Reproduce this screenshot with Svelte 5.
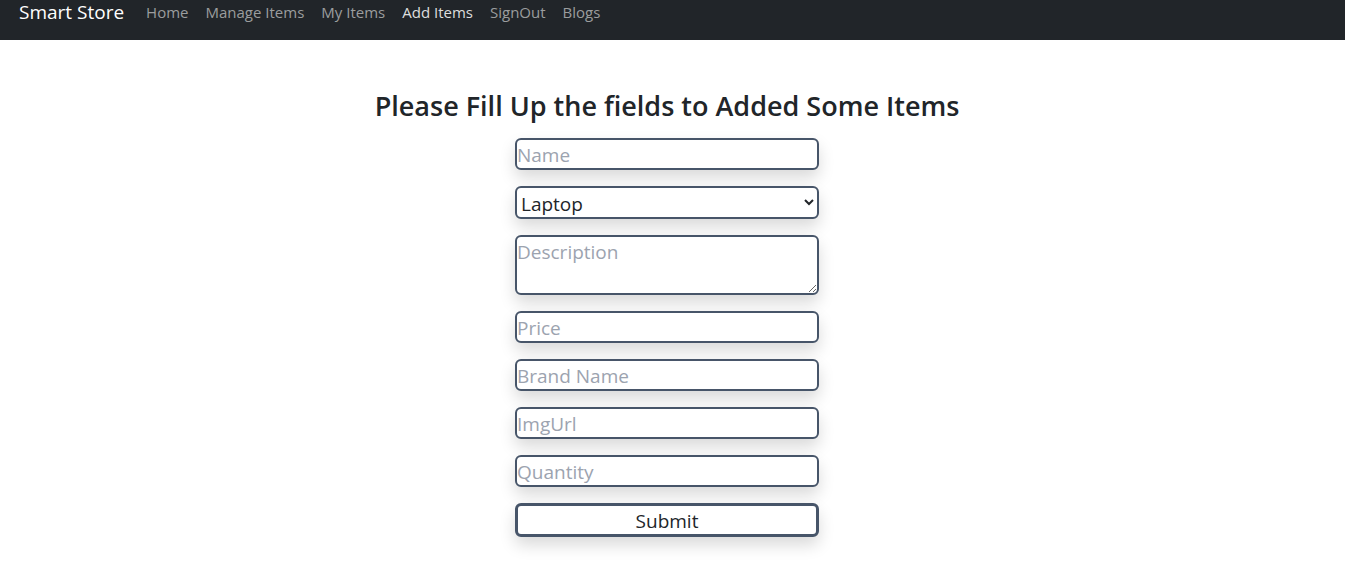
<script>
  const links = ['Home', 'Manage Items', 'My Items', 'Add Items', 'SignOut', 'Blogs'];
  const active = 'Add Items';
</script>

<nav>
  <a class="brand" href="#home">Smart Store</a>
  <div class="links">
    {#each links as link}
      <a href="#{link.replaceAll(' ', '').toLowerCase()}" class:active={link === active}>{link}</a>
    {/each}
  </div>
</nav>
<main>
  <h1>Please Fill Up the fields to Added Some Items</h1>
  <form onsubmit={(e) => e.preventDefault()}>
    <input aria-label="Name" placeholder="Name" />
    <select aria-label="Category">
      <option>Laptop</option>
      <option>Mobile</option>
    </select>
    <textarea aria-label="Description" placeholder="Description" rows="2"></textarea>
    <input aria-label="Price" placeholder="Price" type="number" />
    <input aria-label="Brand Name" placeholder="Brand Name" />
    <input aria-label="ImgUrl" placeholder="ImgUrl" />
    <input aria-label="Quantity" placeholder="Quantity" type="number" />
    <button type="submit">Submit</button>
  </form>
</main>

<style>
  :global(body) {
    margin: 0;
    background: #fff;
    color: #212529;
    font-family: "Segoe UI", "Open Sans", "Noto Sans", sans-serif;
  }
  nav {
    display: flex;
    align-items: center;
    gap: 22px;
    box-sizing: border-box;
    height: 40px;
    padding: 0 19px 16px;
    background: #212529;
    white-space: nowrap;
  }
  nav a {
    color: #9b9d9e;
    text-decoration: none;
    font-size: 15px;
    line-height: 24px;
  }
  nav .brand {
    color: #fff;
    font-size: 19px;
  }
  .links {
    display: flex;
    gap: 17px;
  }
  nav .active {
    color: #dedede;
  }
  main {
    display: flex;
    flex-direction: column;
    align-items: center;
    padding: 48px 11px 48px 0;
  }
  h1 {
    margin: 0 0 14px;
    font-size: 27px;
    font-weight: 600;
    line-height: 36px;
    text-align: center;
  }
  form {
    display: grid;
    gap: 16px;
    width: 304px;
    max-width: 90%;
  }
  input,
  select,
  textarea,
  button {
    box-sizing: border-box;
    width: 100%;
    height: 32px;
    margin: 0;
    padding: 2px 0 0;
    border: 2px solid #475569;
    border-radius: 6px;
    background: #fff;
    color: #212529;
    font-family: inherit;
    font-size: 19px;
    line-height: 26px;
    box-shadow: 0 8px 16px rgb(0 0 0 / 0.15);
  }
  select {
    height: 33px;
  }
  textarea {
    display: block;
    height: 60px;
    resize: vertical;
  }
  button {
    height: 34px;
    border-width: 3px;
  }
  ::placeholder {
    color: #9ca3af;
    opacity: 1;
  }
</style>
